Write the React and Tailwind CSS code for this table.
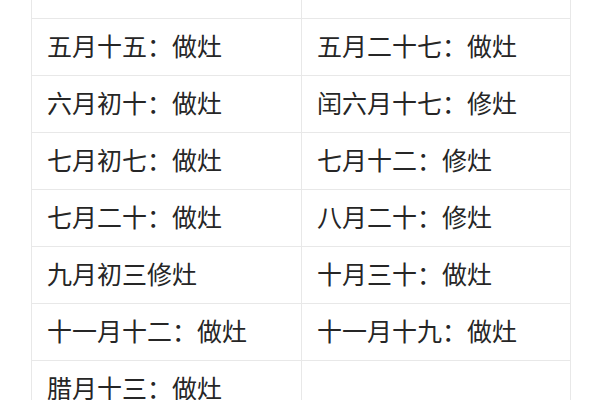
const rows = [
  ['四月二十八：做灶', '五月初一：做灶'],
  ['五月十五：做灶', '五月二十七：做灶'],
  ['六月初十：做灶', '闰六月十七：修灶'],
  ['七月初七：做灶', '七月十二：修灶'],
  ['七月二十：做灶', '八月二十：修灶'],
  ['九月初三修灶', '十月三十：做灶'],
  ['十一月十二：做灶', '十一月十九：做灶'],
  ['腊月十三：做灶', ''],
]

export default function App() {
  return (
    <div className="h-[400px] w-[600px] overflow-hidden bg-white">
      <div
        className="ml-[31px] mt-[-39px] grid w-[539px] grid-cols-[270px_269px] border-l border-t border-[#e8e8e8] text-[25px] text-[#262626]"
        style={{ fontFamily: '"Noto Sans CJK SC", "Noto Sans", sans-serif' }}
      >
        {rows.map(([a, b], i) => (
          <div key={i} className={i === 0 ? 'contents text-[#d8d8d8]' : 'contents'}>
            <div className="flex h-[57px] items-center border-b border-r border-[#e8e8e8] pl-[15px]">
              <span className={i === 0 ? '-mt-[8px]' : '-mt-[2px]'}>{a}</span>
            </div>
            <div className="flex h-[57px] items-center border-b border-r border-[#e8e8e8] pl-[15px]">
              <span className={i === 0 ? '-mt-[8px]' : '-mt-[2px]'}>{b}</span>
            </div>
          </div>
        ))}
      </div>
    </div>
  )
}
